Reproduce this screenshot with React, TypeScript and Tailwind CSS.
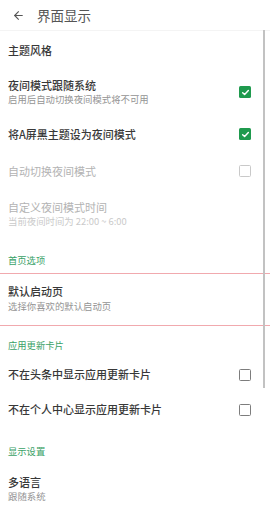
import { ArrowLeft } from 'lucide-react'

const font = { fontFamily: '"Noto Sans CJK SC", "Noto Sans", sans-serif' }

function Check({ on, dim }: { on?: boolean; dim?: boolean }) {
  if (on) {
    return (
      <span className="flex h-[12px] w-[12px] items-center justify-center rounded-[1.5px] bg-[#1f9a4e]">
        <svg width="9" height="9" viewBox="0 0 12 12" fill="none">
          <path d="M2.2 6.3 L4.8 8.8 L9.8 3.4" stroke="#fff" strokeWidth="1.9" strokeLinecap="round" strokeLinejoin="round" />
        </svg>
      </span>
    )
  }
  return (
    <span
      className={
        'block h-[12px] w-[12px] rounded-[1.5px] border-[1.5px] border-solid ' +
        (dim ? 'border-[#c9c9c9]' : 'border-[#7d7d7d]')
      }
    />
  )
}

function Category({ label, h, pt }: { label: string; h: string; pt: string }) {
  return (
    <div className={`flex items-center pl-[8px] text-[9.3px] leading-[12px] text-[#3aa267] ${h} ${pt}`}>{label}</div>
  )
}

function Row({
  title,
  sub,
  h,
  dim,
  box,
}: {
  title: string
  sub?: string
  h: string
  dim?: boolean
  box?: 'on' | 'off'
}) {
  return (
    <div className={`flex items-center justify-between pl-[8px] pr-[19px] ${h}`}>
      <div className="flex flex-col">
        <span className={`text-[11px] leading-[13px] ${dim ? 'text-[#b3b3b3]' : 'font-medium text-[#383838]'}`}>{title}</span>
        {sub && (
          <span className={`mt-[1.5px] text-[9.4px] leading-[12px] ${dim ? 'text-[#cacaca]' : 'text-[#949494]'}`}>{sub}</span>
        )}
      </div>
      {box && <Check on={box === 'on'} dim={dim} />}
    </div>
  )
}

export default function App() {
  return (
    <div className="relative h-[507px] w-[270px] overflow-hidden bg-white" style={font}>
      <div className="flex h-[30px] items-center pl-[12px]">
        <ArrowLeft size={13} strokeWidth={2} color="#555" />
        <span className="ml-[12px] text-[13.5px] leading-[16px] text-[#555]">界面显示</span>
      </div>
      <div className="h-px bg-[#f4f4f4]" />

      <div className="flex h-[38px] items-center pl-[8px] text-[11px] font-medium leading-[13px] text-[#383838]">主题风格</div>
      <Row title="夜间模式跟随系统" sub="启用后自动切换夜间模式将不可用" h="h-[46px]" box="on" />
      <Row title="将A屏黑主题设为夜间模式" h="h-[38px]" box="on" />
      <Row title="自动切换夜间模式" h="h-[36px]" dim box="off" />
      <Row title="自定义夜间模式时间" sub="当前夜间时间为 22:00 ~ 6:00" h="h-[50px]" dim />

      <div className="flex h-[34px] items-end pb-[7px] pl-[8px] text-[9.3px] leading-[12px] text-[#3aa267]">首页选项</div>
      <div className="h-px bg-[#f1a9ae]" />
      <div className="pb-[2px]">
        <Row title="默认启动页" sub="选择你喜欢的默认启动页" h="h-[49px]" />
      </div>
      <div className="h-px bg-[#f1a9ae]" />

      <Category label="应用更新卡片" h="h-[32px]" pt="pt-[5px]" />
      <Row title="不在头条中显示应用更新卡片" h="h-[33px]" box="off" />
      <Row title="不在个人中心显示应用更新卡片" h="h-[37px]" box="off" />

      <Category label="显示设置" h="h-[42px]" pt="pt-[3px]" />
      <Row title="多语言" sub="跟随系统" h="h-[38px]" />

      <div className="absolute left-[263px] top-[30px] h-[358px] w-[2px] bg-[#c2c2c2]" />
    </div>
  )
}
